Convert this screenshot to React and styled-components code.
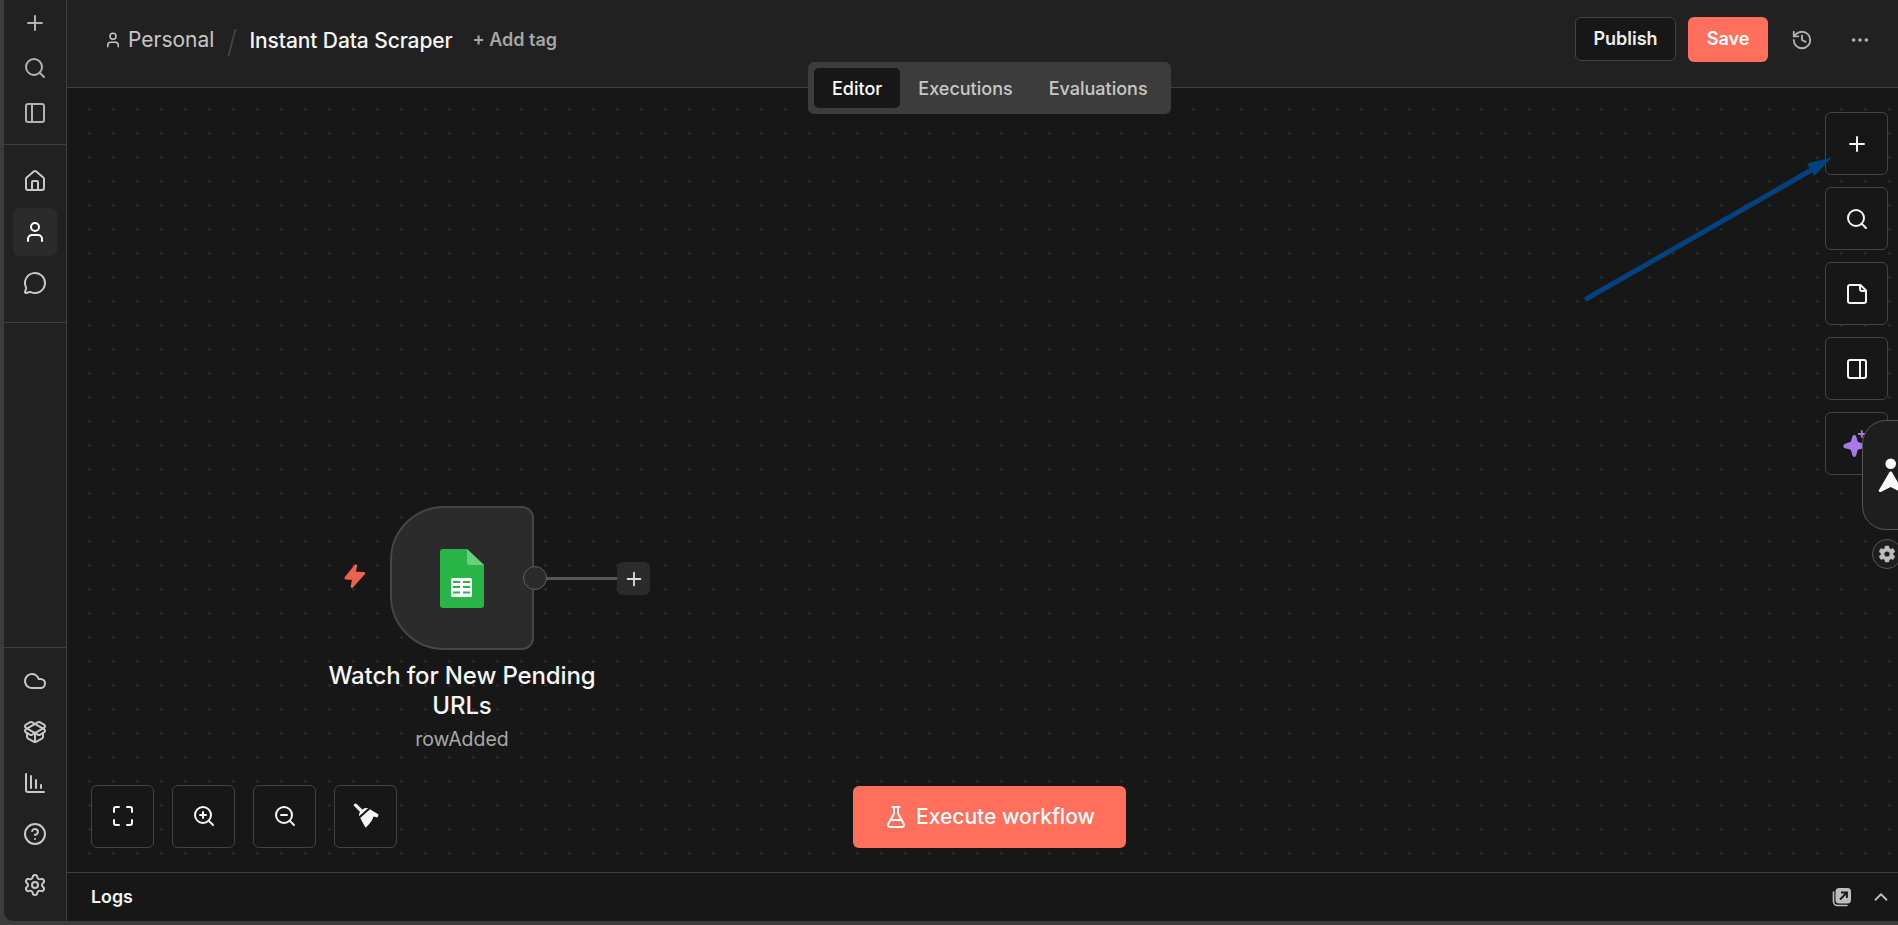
import React from 'react';
import styled, { createGlobalStyle, css } from 'styled-components';
import {
  Plus, Search, PanelLeft, PanelRight, House, User, MessageCircle, Cloud,
  ChartColumnDecreasing, CircleHelp, Settings, History, Ellipsis,
  ZoomIn, ZoomOut, FlaskConical, ChevronUp, PackageOpen,
} from 'lucide-react';

const c = {
  frame: '#3c3c3c',
  panel: '#212121',
  canvas: '#171717',
  line: '#3e3e3e',
  primary: '#ff6f5c',
  text: '#f5f5f5',
};

const GlobalStyle = createGlobalStyle`
  * { box-sizing: border-box; }
  body { margin: 0; background: ${c.frame}; font-family: Inter, "Liberation Sans", sans-serif; overflow: hidden; }
  button { font: inherit; color: inherit; padding: 0; margin: 0; }
  svg { display: block; flex: none; }
`;

const Frame = styled.div`
  width: 1898px;
  height: 925px;
  padding: 0 0 4px 4px;
  background: ${c.frame};
`;

const Shell = styled.div`
  display: flex;
  height: 100%;
  overflow: hidden;
  background: ${c.canvas};
  border-bottom-left-radius: 10px;
`;

const Sidebar = styled.nav`
  width: 63px;
  flex: none;
  display: flex;
  flex-direction: column;
  justify-content: space-between;
  background: ${c.panel};
  border-right: 1px solid ${c.line};
`;

const SideGroup = styled.div`
  display: flex;
  flex-direction: column;
  align-items: center;
  gap: ${p => p.$gap}px;
  padding: ${p => p.$pad};
  color: ${p => p.$color || '#c8c8c8'};
  border-bottom: ${p => (p.$bottomLine ? `1px solid ${c.line}` : 'none')};
  border-top: ${p => (p.$topLine ? `1px solid ${c.line}` : 'none')};
`;

const SideItem = styled.button`
  display: flex;
  align-items: center;
  justify-content: center;
  width: 44px;
  height: ${p => p.$h}px;
  border: 0;
  border-radius: 6px;
  background: ${p => (p.$active ? '#2b2b2b' : 'transparent')};
  ${p => p.$active && css`color: #fff;`}
`;

const Main = styled.main`
  flex: 1;
  min-width: 0;
  display: flex;
  flex-direction: column;
`;

const Header = styled.header`
  position: relative;
  z-index: 2;
  height: 88px;
  flex: none;
  display: flex;
  justify-content: space-between;
  padding: 17px 24px 0 37px;
  background: ${c.panel};
  border-bottom: 1px solid ${c.line};
`;

const Crumbs = styled.div`
  display: flex;
  align-items: center;
  height: 46px;
  color: #c6c6c6;
`;

const Crumb = styled.span`
  margin: 0 0 1px 6px;
  font-size: 21px;
`;

const Slash = styled.span`
  width: 2px;
  height: 27px;
  margin: 4px 16px 0 17px;
  background: #414141;
  transform: skewX(-15deg);
`;

const Title = styled.h1`
  margin: 1px 0 0;
  font-size: 21px;
  font-weight: 500;
  letter-spacing: -0.1px;
  color: ${c.text};
`;

const AddTag = styled.span`
  margin: 0 0 1px 20px;
  font-size: 18px;
  font-weight: 600;
  color: #a6a6a6;
`;

const Actions = styled.div`
  display: flex;
  align-items: flex-start;
`;

const HeaderButton = styled.button`
  height: ${p => (p.$primary ? 45 : 44)}px;
  width: ${p => (p.$primary ? 80 : 101)}px;
  margin-right: ${p => (p.$primary ? 20 : 12)}px;
  padding-bottom: 2px;
  border: ${p => (p.$primary ? '0' : '1px solid #434343')};
  border-radius: 6px;
  background: ${p => (p.$primary ? c.primary : c.canvas)};
  color: ${p => (p.$primary ? '#fff' : '#ededed')};
  font-size: 18px;
  font-weight: 600;
`;

const GhostButton = styled.button`
  display: flex;
  align-items: center;
  justify-content: center;
  width: 28px;
  height: 45px;
  margin-right: ${p => p.$mr || 0}px;
  border: 0;
  background: none;
  color: #b3b3b3;
`;

const Tabs = styled.div`
  position: absolute;
  left: 741px;
  top: 62px;
  width: 363px;
  height: 52px;
  display: flex;
  padding: 6px;
  border-radius: 6px;
  background: #3c3c3c;
`;

const Tab = styled.button`
  height: 40px;
  padding: 0 18px;
  border: 0;
  border-radius: 5px;
  white-space: nowrap;
  font-size: 18px;
  font-weight: 500;
  background: ${p => (p.$active ? c.canvas : 'transparent')};
  color: ${p => (p.$active ? '#fff' : '#c8c8c8')};
`;

const Canvas = styled.section`
  position: relative;
  flex: 1;
  display: flex;
  flex-direction: column;
  justify-content: space-between;
  padding: 24px 10px 24px 24px;
  background-color: ${c.canvas};
`;

const Dots = styled.svg`
  position: absolute;
  inset: 0;
  width: 100%;
  height: 100%;
`;

const ToolColumn = styled.div`
  position: relative;
  display: flex;
  flex-direction: column;
  align-self: flex-end;
  gap: 12px;
`;

const BottomBar = styled.div`
  position: relative;
  display: grid;
  grid-template-columns: 1fr auto 1fr;
`;

const ToolRow = styled.div`
  display: flex;
  gap: 18px;
`;

const Tool = styled.button`
  display: flex;
  align-items: center;
  justify-content: center;
  width: 63px;
  height: 63px;
  padding-bottom: ${p => (p.$raised ? 1 : 0)}px;
  border: 1px solid #434343;
  border-radius: 6px;
  background: ${c.canvas};
  color: ${c.text};
`;

const Execute = styled.button`
  display: flex;
  align-items: center;
  justify-content: center;
  gap: 8px;
  width: 273px;
  height: 62px;
  margin: 1px 0 0 0;
  padding-bottom: 1px;
  border: 0;
  border-radius: 6px;
  background: ${c.primary};
  color: #fff;
  font-size: 21px;
  font-weight: 500;
  white-space: nowrap;
`;

const TriggerNode = styled.div`
  position: absolute;
  left: 323px;
  top: 418px;
  width: 144px;
  height: 144px;
  display: flex;
  align-items: center;
  justify-content: center;
  border: 2px solid #464646;
  border-radius: 54px 12px 12px 54px;
  background: #2b2b2b;
`;

const Bolt = styled.svg`
  position: absolute;
  left: 276px;
  top: 475px;
`;

const Edge = styled.div`
  position: absolute;
  left: 479px;
  top: 489px;
  width: 71px;
  height: 3px;
  background: #565656;
`;

const Port = styled.div`
  position: absolute;
  left: 456px;
  top: 478px;
  width: 24px;
  height: 24px;
  border: 1px solid #5e5e5e;
  border-radius: 50%;
  background: #2b2b2b;
`;

const AddNode = styled.button`
  position: absolute;
  left: 550px;
  top: 474px;
  width: 33px;
  height: 33px;
  display: flex;
  align-items: center;
  justify-content: center;
  border: 0;
  border-radius: 6px;
  background: #2b2b2b;
  color: #dcdcdc;
`;

const NodeLabel = styled.div`
  position: absolute;
  left: 245px;
  top: 573px;
  width: 300px;
  text-align: center;
`;

const NodeTitle = styled.div`
  font-size: 24px;
  line-height: 30px;
  font-weight: 500;
  letter-spacing: -0.13px;
  color: ${c.text};
`;

const NodeSubtitle = styled.div`
  margin-top: 6px;
  font-size: 19.5px;
  line-height: 24px;
  color: #a8a8a8;
`;

const Pointer = styled.svg`
  position: absolute;
  left: 1514px;
  top: 60px;
  z-index: 3;
`;

const SideWidget = styled.div`
  position: absolute;
  left: 1795px;
  top: 332px;
  width: 60px;
  height: 110px;
  border: 1px solid #565656;
  border-radius: 24px;
  background: #1e1e1e;
`;

const WidgetGear = styled.div`
  position: absolute;
  left: 1805px;
  top: 451px;
  width: 30px;
  height: 30px;
  display: flex;
  align-items: center;
  justify-content: center;
  border: 1px solid #565656;
  border-radius: 50%;
  background: #1e1e1e;
`;

const Logs = styled.footer`
  height: 49px;
  flex: none;
  display: flex;
  align-items: center;
  justify-content: space-between;
  padding: 0 6px 1px 24px;
  border-top: 1px solid ${c.line};
`;

const LogsTitle = styled.span`
  font-size: 17.8px;
  font-weight: 600;
  color: ${c.text};
`;

const LogsActions = styled.div`
  display: flex;
  align-items: center;
  gap: 18px;
  color: #bdbdbd;
`;

const line = { size: 24, strokeWidth: 2 };

const NoteIcon = () => (
  <svg width="24" height="24" viewBox="0 0 24 24" fill="none" stroke="currentColor" strokeWidth="2" strokeLinejoin="round">
    <path d="M15.5 3H5a2 2 0 0 0-2 2v14a2 2 0 0 0 2 2h14a2 2 0 0 0 2-2V8.5z" />
    <path d="M15 3v4a2 2 0 0 0 2 2h4" />
  </svg>
);

const FitIcon = () => (
  <svg width="24" height="24" viewBox="0 0 24 24" fill="none" stroke="currentColor" strokeWidth="2" strokeLinecap="round">
    <path d="M8 3H5a2 2 0 0 0-2 2v3M21 8V5a2 2 0 0 0-2-2h-3M3 16v3a2 2 0 0 0 2 2h3M16 21h3a2 2 0 0 0 2-2v-3" />
  </svg>
);

const BroomIcon = () => (
  <svg width="26" height="26" viewBox="-1 -1 26 26" fill="currentColor">
    <path d="M1.500 1.200 8 7.500" stroke="currentColor" strokeWidth="3.200" strokeLinecap="round" />
    <path d="M5 12.300 5.300 9 10 4.300l4.300-.2z" />
    <path d="M16 5.300 24.600 10.500 23.500 13.500 19.600 12.600Q17.500 18.800 11.500 23.800L6.200 14z" />
  </svg>
);

const SparkleIcon = () => (
  <svg width="30" height="30" viewBox="0 1 30 30" fill="#a67be8">
    <path d="M12.300 7c1 0 1.700.6 2 1.800l1.500 5 5.600 1.900c2.400.9 2.400 3.700 0 4.600l-5.600 1.500-1.500 5.200c-.7 2.500-3.300 2.500-4 0l-1.500-5.200-5.600-1.500c-2.400-.9-2.400-3.700 0-4.600l5.600-1.900 1.500-5c.3-1.200 1-1.800 2-1.800z" />
    <path d="M19.800 2.300v7.400M16.100 6h7.400" stroke="#a67be8" strokeWidth="1.800" />
  </svg>
);

const SheetsIcon = () => (
  <svg width="44" height="58" viewBox="0 0 44 58" overflow="visible">
    <path d="M3 0h24l17 16v40a3 3 0 0 1-3 3H3a3 3 0 0 1-3-3V3a3 3 0 0 1 3-3z" fill="#28b446" />
    <path d="M27 0l17 16H29a2 2 0 0 1-2-2z" fill="#6ace7c" />
    <rect x="11" y="29" width="21" height="19" rx="1.500" fill="#fff" />
    <path d="M13 32h7v2h-7zM23 32h7v2h-7zM13 37h7v2h-7zM23 37h7v2h-7zM13 42.500h7v2h-7zM23 42.500h7v2h-7z" fill="#28b446" />
  </svg>
);

const WidgetFigure = () => (
  <svg width="60" height="108" viewBox="0 0 60 108" fill="#fff">
    <circle cx="27.700" cy="42.700" r="5.300" />
    <path d="M27.700 50.500c.8 0 1.200.5 1.600 1.300L39.700 69.500q0 2-2 1.500l-10-5-10 5q-2 .5-2-1.500L26.100 51.800c.4-.8.8-1.300 1.600-1.300z" />
  </svg>
);

const GearSolid = () => (
  <svg width="18" height="18" viewBox="-9 -9 18 18" fill="#bcbcbc">
    {[0, 60, 120].map(a => <rect key={a} x="-2.300" y="-8.300" width="4.600" height="16.600" rx="1.200" transform={`rotate(${a})`} />)}
    <circle r="6.300" />
    <circle r="2.600" fill="#1e1e1e" />
  </svg>
);

const PopOutIcon = () => (
  <svg width="20" height="20" viewBox="0 0 20 20" fill="none">
    <path d="M1.500 5v9.500a4 4 0 0 0 4 4h9.500" stroke="currentColor" strokeWidth="1.600" strokeLinecap="round" />
    <rect x="3.500" y="1" width="15.500" height="15.500" rx="3.500" fill="currentColor" />
    <path d="M8 12.500l6-6M9 5.500H15V11" stroke="#171717" strokeWidth="1.800" />
  </svg>
);

export default function App() {
  return (
    <Frame>
      <GlobalStyle />
      <Shell>
        <Sidebar>
          <div>
            <SideGroup $gap={1} $pad="1px 0 9px" $color="#b2b2b2" $bottomLine>
              <SideItem $h={44}><Plus {...line} /></SideItem>
              <SideItem $h={44}><Search {...line} /></SideItem>
              <SideItem $h={44}><PanelLeft {...line} /></SideItem>
            </SideGroup>
            <SideGroup $gap={3} $pad="12px 0 15px" $bottomLine>
              <SideItem $h={48}><House {...line} /></SideItem>
              <SideItem $h={48} $active><User {...line} /></SideItem>
              <SideItem $h={48}><MessageCircle {...line} /></SideItem>
            </SideGroup>
          </div>
          <SideGroup $gap={3} $pad="9px 0 12px" $topLine>
            <SideItem $h={48}><Cloud {...line} /></SideItem>
            <SideItem $h={48}><PackageOpen {...line} /></SideItem>
            <SideItem $h={48}><ChartColumnDecreasing {...line} /></SideItem>
            <SideItem $h={48}><CircleHelp {...line} /></SideItem>
            <SideItem $h={48}><Settings {...line} /></SideItem>
          </SideGroup>
        </Sidebar>
        <Main>
          <Header>
            <Crumbs>
              <User size={18} strokeWidth={2} />
              <Crumb>Personal</Crumb>
              <Slash />
              <Title>Instant Data Scraper</Title>
              <AddTag>+ Add tag</AddTag>
            </Crumbs>
            <Actions>
              <HeaderButton>Publish</HeaderButton>
              <HeaderButton $primary>Save</HeaderButton>
              <GhostButton $mr={30}><History size={22} strokeWidth={2} /></GhostButton>
              <GhostButton><Ellipsis size={22} strokeWidth={2} /></GhostButton>
            </Actions>
            <Tabs>
              <Tab $active>Editor</Tab>
              <Tab>Executions</Tab>
              <Tab>Evaluations</Tab>
            </Tabs>
          </Header>
          <Canvas>
            <Dots>
              <defs>
                <pattern id="grid" x="21.500" y="20.500" width="24" height="24" patternUnits="userSpaceOnUse">
                  <circle cx="1" cy="1" r="0.900" fill="#464646" />
                </pattern>
              </defs>
              <rect width="100%" height="100%" fill="url(#grid)" />
            </Dots>
            <Bolt width="25" height="27" viewBox="0 0 24 26">
              <path d="M12.300 2.600 10.800 9.600 20 10 8.600 22.700 10.200 15 2.600 14.500z" fill="#ea6350" stroke="#ea6350" strokeWidth="2.600" strokeLinejoin="round" />
            </Bolt>
            <TriggerNode><SheetsIcon /></TriggerNode>
            <Edge />
            <Port />
            <AddNode><Plus size={22} strokeWidth={2} /></AddNode>
            <NodeLabel>
              <NodeTitle>Watch for New Pending URLs</NodeTitle>
              <NodeSubtitle>rowAdded</NodeSubtitle>
            </NodeLabel>
            <ToolColumn>
              <Tool><Plus {...line} /></Tool>
              <Tool><Search {...line} /></Tool>
              <Tool><NoteIcon /></Tool>
              <Tool><PanelRight {...line} /></Tool>
              <Tool><SparkleIcon /></Tool>
            </ToolColumn>
            <SideWidget><WidgetFigure /></SideWidget>
            <WidgetGear><GearSolid /></WidgetGear>
            <Pointer width="260" height="160" viewBox="0 0 260 160">
              <path d="M6 150.500 234 20" stroke="#02427f" strokeWidth="5" strokeLinecap="round" />
              <path d="M250.500 9.500 226 15.500 233.500 28z" fill="#02427f" />
            </Pointer>
            <BottomBar>
              <ToolRow>
                <Tool $raised><FitIcon /></Tool>
                <Tool $raised><ZoomIn {...line} /></Tool>
                <Tool $raised><ZoomOut {...line} /></Tool>
                <Tool $raised><BroomIcon /></Tool>
              </ToolRow>
              <Execute><FlaskConical size={24} strokeWidth={2} />Execute workflow</Execute>
            </BottomBar>
          </Canvas>
          <Logs>
            <LogsTitle>Logs</LogsTitle>
            <LogsActions>
              <PopOutIcon />
              <ChevronUp size={22} strokeWidth={2} />
            </LogsActions>
          </Logs>
        </Main>
      </Shell>
    </Frame>
  );
}
